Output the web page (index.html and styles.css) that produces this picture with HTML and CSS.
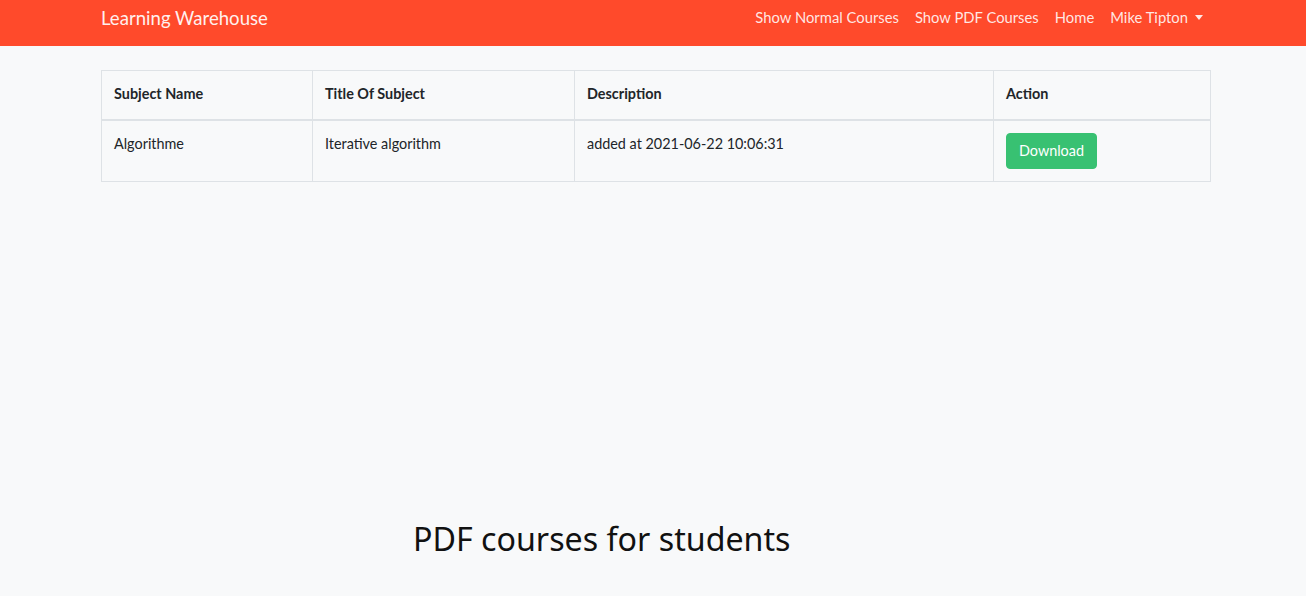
FILE: index.html
```html
<!DOCTYPE html>
<html lang="en">
<head>
  <meta charset="UTF-8">
  <meta name="viewport" content="width=device-width, initial-scale=1">
  <title>PDF Courses - Learning Warehouse</title>
  <link rel="stylesheet" href="styles.css">
</head>
<body>

  <nav class="navbar">
    <div class="container nav-inner">
      <a class="brand" href="#">Learning Warehouse</a>
      <ul class="nav-links">
        <li><a href="#">Show Normal Courses</a></li>
        <li><a href="#">Show PDF Courses</a></li>
        <li><a href="#">Home</a></li>
        <li><a href="#" class="dropdown-toggle">Mike Tipton</a></li>
      </ul>
    </div>
  </nav>

  <main class="container">
    <table class="courses">
      <thead>
        <tr>
          <th class="col-name">Subject Name</th>
          <th class="col-title">Title Of Subject</th>
          <th class="col-desc">Description</th>
          <th>Action</th>
        </tr>
      </thead>
      <tbody>
        <tr>
          <td>Algorithme</td>
          <td>Iterative algorithm</td>
          <td>added at 2021-06-22 10:06:31</td>
          <td><button class="btn-success">Download</button></td>
        </tr>
      </tbody>
    </table>

    <h2 class="page-title">PDF courses for students</h2>
  </main>

</body>
</html>
```

FILE: styles.css
```css
* {
  box-sizing: border-box;
}

body {
  margin: 0;
  padding-left: 6px;
  background: #f8f9fa;
  color: #212529;
  font-family: Lato, "Noto Sans", sans-serif;
  font-size: 14.4px;
  line-height: 1.6;
}

.container {
  width: 1110px;
  margin: 0 auto;
}

.navbar {
  background: #ff4a2b;
  height: 46px;
  margin-left: -6px;
  padding-left: 6px;
}

.nav-inner {
  display: flex;
  align-items: flex-start;
  justify-content: space-between;
  padding-top: 4px;
}

.brand {
  color: #fff;
  font-size: 18.6px;
  text-decoration: none;
  opacity: 0.92;
}

.nav-links {
  display: flex;
  list-style: none;
  margin: 0;
  padding: 0;
}

.nav-links a {
  display: block;
  padding: 2px 8px;
  color: rgba(255, 255, 255, 0.88);
  text-decoration: none;
  font-size: 14.8px;
}

.dropdown-toggle::after {
  content: "";
  display: inline-block;
  margin-left: 7px;
  vertical-align: 3px;
  border-top: 5px solid rgba(255, 255, 255, 0.88);
  border-left: 4.5px solid transparent;
  border-right: 4.5px solid transparent;
}

.courses {
  width: 100%;
  margin-top: 24px;
  border-collapse: collapse;
  border: 1px solid #dee2e6;
}

.courses th,
.courses td {
  border: 1px solid #dee2e6;
  padding: 11px 12px 13px;
  line-height: 24px;
  text-align: left;
  vertical-align: top;
}

.courses th {
  font-weight: 700;
  border-bottom-width: 2px;
}

.courses td:last-child {
  padding-top: 12px;
  padding-bottom: 12px;
}

.col-name {
  width: 211px;
}

.col-title {
  width: 262px;
}

.col-desc {
  width: 419px;
}

.btn-success {
  background: #38c172;
  color: #fff;
  border: 1px solid #38c172;
  border-radius: 4px;
  font-family: inherit;
  font-size: 14.4px;
  line-height: 24px;
  padding: 5px 12px;
  cursor: pointer;
}

.page-title {
  margin: 331px 0 0 312px;
  font-family: "Noto Sans", sans-serif;
  font-weight: 400;
  font-size: 32.2px;
  color: #111;
}
```
